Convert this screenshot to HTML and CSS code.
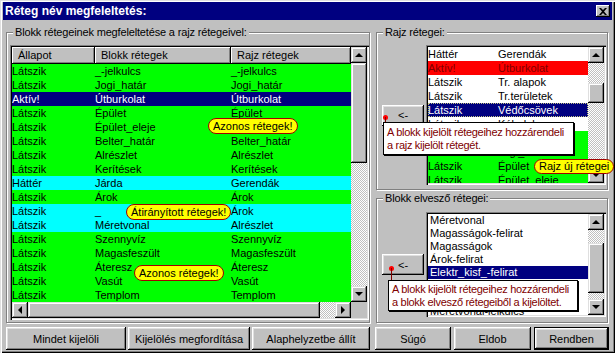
FILE: index.html
```html
<!DOCTYPE html>
<html>
<head>
    <meta charset="UTF-8">
    <title>Réteg név megfeleltetés</title>
    <link rel="stylesheet" href="styles.css">
</head>
<body>
	<div class="window">
		<div class="titlebar">
			<span class="title">Réteg név megfeleltetés:</span>
			<span class="close"><svg width="8" height="7" viewBox="0 0 8 7"><path d="M0 0h2l2 2 2-2h2l-3 3.5 3 3.5h-2l-2-2-2 2h-2l3-3.5z" fill="#000"/></svg></span>
		</div>
		<div class="main">
			<fieldset class="group group-left">
				<legend>Blokk rétegeinek megfeleltetése a rajz rétegeivel:</legend>
				<div class="listview">
					<div class="lv-body">
						<div class="lv-head">
							<div class="hcell">Állapot</div>
							<div class="hcell">Blokk rétegek</div>
							<div class="hcell">Rajz rétegek</div>
						</div>
						<div class="row green"><span>Látszik</span><span>_-jelkulcs</span><span>_-jelkulcs</span></div>
						<div class="row green"><span>Látszik</span><span>Jogi_határ</span><span>Jogi_határ</span></div>
						<div class="row sel"><span>Aktív!</span><span>Útburkolat</span><span>Útburkolat</span></div>
						<div class="row green"><span>Látszik</span><span>Épület</span><span>Épület</span></div>
						<div class="row green"><span>Látszik</span><span>Épület_eleje</span><span>Épület_eleje</span></div>
						<div class="row green"><span>Látszik</span><span>Belter_határ</span><span>Belter_határ</span></div>
						<div class="row green"><span>Látszik</span><span>Alrészlet</span><span>Alrészlet</span></div>
						<div class="row green"><span>Látszik</span><span>Kerítések</span><span>Kerítések</span></div>
						<div class="row cyan"><span>Háttér</span><span>Járda</span><span>Gerendák</span></div>
						<div class="row green"><span>Látszik</span><span>Árok</span><span>Árok</span></div>
						<div class="row cyan"><span>Látszik</span><span>_</span><span>Árok</span></div>
						<div class="row cyan"><span>Látszik</span><span>Méretvonal</span><span>Alrészlet</span></div>
						<div class="row green"><span>Látszik</span><span>Szennyvíz</span><span>Szennyvíz</span></div>
						<div class="row green"><span>Látszik</span><span>Magasfeszült</span><span>Magasfeszült</span></div>
						<div class="row green"><span>Látszik</span><span>Áteresz</span><span>Áteresz</span></div>
						<div class="row green"><span>Látszik</span><span>Vasút</span><span>Vasút</span></div>
						<div class="row green"><span>Látszik</span><span>Templom</span><span>Templom</span></div>
					</div>
					<div class="vscroll">
						<div class="sb-btn"><i class="arr up"></i></div>
						<div class="track"><div class="thumb thumb-main"></div></div>
						<div class="sb-btn"><i class="arr down"></i></div>
					</div>
					<div class="hscroll">
						<div class="sb-btn"><i class="arr left"></i></div>
						<div class="hthumb"></div>
						<div class="htrack"></div>
						<div class="sb-btn"><i class="arr right"></i></div>
					</div>
					<div class="corner"></div>
				</div>
			</fieldset>
			<div class="right-col">
				<fieldset class="group group-rajz">
					<legend>Rajz rétegei:</legend>
					<div class="pair">
						<div class="btn small">&lt;-</div>
						<div class="listbox list-rajz">
							<div class="lb-rows">
								<div class="lrow"><span>Háttér</span><span>Gerendák</span></div>
								<div class="lrow red"><span>Aktív!</span><span>Útburkolat</span></div>
								<div class="lrow"><span>Látszik</span><span>Tr. alapok</span></div>
								<div class="lrow"><span>Látszik</span><span>Tr.területek</span></div>
								<div class="lrow sel focus"><span>Látszik</span><span>Védőcsövek</span></div>
								<div class="lrow"><span>Látszik</span><span>Kábelek</span></div>
								<div class="lrow green"><span>Látszik</span><span>_-jelkulcs</span></div>
								<div class="lrow green"><span>Látszik</span><span>Jogi_határ</span></div>
								<div class="lrow green"><span>Látszik</span><span>Épület</span></div>
								<div class="lrow green"><span>Látszik</span><span>Épület_eleje</span></div>
							</div>
							<div class="vscroll">
								<div class="sb-btn"><i class="arr up"></i></div>
								<div class="track"><div class="thumb thumb-rajz"></div></div>
								<div class="sb-btn"><i class="arr down"></i></div>
							</div>
						</div>
					</div>
				</fieldset>
				<fieldset class="group group-lost">
					<legend>Blokk elvesző rétegei:</legend>
					<div class="pair">
						<div class="btn small">&lt;-</div>
						<div class="listbox list-lost">
							<div class="lb-rows">
								<div class="nrow">Méretvonal</div>
								<div class="nrow">Magasságok-felirat</div>
								<div class="nrow">Magasságok</div>
								<div class="nrow">Árok-felirat</div>
								<div class="nrow sel">Elektr_kisf_-felirat</div>
								<div class="nrow">Kábel-felirat</div>
								<div class="nrow">Közmű-felirat</div>
								<div class="nrow">Méretvonal-jelkulcs</div>
							</div>
							<div class="vscroll">
								<div class="sb-btn"><i class="arr up"></i></div>
								<div class="track"><div class="thumb thumb-lost"></div></div>
								<div class="sb-btn"><i class="arr down"></i></div>
							</div>
						</div>
					</div>
				</fieldset>
			</div>
		</div>
		<div class="buttons">
			<div class="btn b1">Mindet kijelöli</div>
			<div class="btn b2">Kijelölés megfordítása</div>
			<div class="btn b3">Alaphelyzetbe állít</div>
			<div class="btn b4">Súgó</div>
			<div class="btn b5">Eldob</div>
			<div class="btn b6 default">Rendben</div>
		</div>

		<!-- feliratok a kép fölött -->
		<div class="pill p1">Azonos rétegek!</div>
		<div class="pill p2">Átirányított rétegek!</div>
		<div class="pill p3">Azonos rétegek!</div>
		<div class="pill p4">Rajz új rétegei</div>

		<div class="dot d1"></div>
		<div class="stick s1"></div>
		<div class="tip t1">A blokk kijelölt rétegeihez hozzárendeli<br>a rajz kijelölt rétegét.</div>

		<div class="dot d2"></div>
		<div class="stick s2"></div>
		<div class="tip t2">A blokk kijelölt rétegeihez hozzárendeli<br>a blokk elvesző rétegeiből a kijelöltet.</div>
	</div>
</body>
</html>
```

FILE: styles.css
```css
*{
	margin: 0;
	padding: 0;
	box-sizing: border-box;
}
body{
	background: #fff;
	font-family: "Liberation Sans", Arial, sans-serif;
	font-size: 11px;
	color: #000;
}
.window{
	position: relative;
	width: 615px;
	height: 353px;
	background: #c0c0c0;
	padding: 2px 3px 3px 3px;
	box-shadow: inset 1px 1px #dfdfdf, inset 2px 2px #fff, inset -1px -1px #000, inset -2px -2px #808080;
}
.titlebar{
	height: 18px;
	background: #000080;
	color: #fff;
	display: flex;
	align-items: center;
	justify-content: space-between;
	padding: 0 2px 0 2px;
}
.title{
	font-weight: bold;
	font-size: 12px;
}
.close{
	width: 14px;
	height: 12px;
	background: #c0c0c0;
	display: flex;
	align-items: center;
	justify-content: center;
	box-shadow: inset -1px -1px #000, inset 1px 1px #fff, inset -2px -2px #808080;
}

/* csoportok */
.main{
	display: flex;
	gap: 6px;
	margin-top: 6px;
	padding-left: 3px;
	height: 297px;
}
.group{
	border: 1px solid #808080;
	box-shadow: inset 1px 1px #fff, 1px 1px #fff;
	min-width: 0;
}
.group legend{
	height: 13px;
	line-height: 13px;
	padding: 0 2px;
	background: #c0c0c0;
	letter-spacing: -0.16px;
}
.group-left{
	width: 364px;
	height: 297px;
	padding: 6px 0 2px 3px;
}
.group-left legend{
	margin-left: 3px;
}
.right-col{
	width: 232px;
	display: flex;
	flex-direction: column;
	gap: 2px;
}
.group-rajz{
	height: 164px;
	padding: 6px 1px 0 5px;
}
.group-lost{
	height: 131px;
	padding: 7px 1px 0 5px;
}
.group-rajz legend, .group-lost legend{
	margin-left: 1px;
}
.pair{
	display: flex;
	align-items: center;
	gap: 2px;
}

/* nagy lista */
.listview{
	width: 359px;
	height: 275px;
	background: #c0c0c0;
	padding: 2px;
	box-shadow: inset 1px 1px #808080, inset 2px 2px #000, inset -1px -1px #fff, inset -2px -2px #dfdfdf;
	display: grid;
	grid-template-columns: 339px 16px;
	grid-template-rows: 255px 16px;
}
.lv-body{
	overflow: hidden;
	background: #fff;
}
.lv-head{
	display: grid;
	grid-template-columns: 83px 136px 1fr;
	height: 17px;
}
.hcell{
	background: #c0c0c0;
	padding-left: 6px;
	line-height: 16px;
	box-shadow: inset -1px -1px #000, inset 1px 1px #fff, inset -2px -2px #808080;
}
.row{
	display: grid;
	grid-template-columns: 83px 136px 1fr;
	height: 14px;
	line-height: 14px;
	white-space: nowrap;
}
.green{ background: #00ff00; }
.cyan{ background: #00ffff; }
.sel{ background: #000080; color: #fff; }
.red{ background: #ff0000; color: #800000; }

/* görgetősáv */
.vscroll{
	display: flex;
	flex-direction: column;
	width: 16px;
}
.track{
	flex: 1;
	background: repeating-conic-gradient(#fff 0 25%, #c0c0c0 0 50%) 0 0 / 2px 2px;
}
.sb-btn, .thumb, .hthumb{
	background: #c0c0c0;
	box-shadow: inset -1px -1px #000, inset 1px 1px #dfdfdf, inset -2px -2px #808080, inset 2px 2px #fff;
}
.sb-btn{
	width: 16px;
	height: 16px;
	flex: none;
	display: flex;
	align-items: center;
	justify-content: center;
}
.thumb{ width: 16px; }
.thumb-main{ height: 100px; }
.thumb-rajz{ height: 20px; margin-top: 20px; }
.thumb-lost{ height: 50px; margin-top: 13px; }
.hscroll{
	display: flex;
}
.hthumb{ width: 292px; }
.htrack{
	flex: 1;
	background: repeating-conic-gradient(#fff 0 25%, #c0c0c0 0 50%) 0 0 / 2px 2px;
}
.corner{ background: #c0c0c0; }
.arr{
	display: block;
	width: 0;
	height: 0;
}
.arr.up{ border-left: 4px solid transparent; border-right: 4px solid transparent; border-bottom: 4px solid #000; margin-top: -1px; }
.arr.down{ border-left: 4px solid transparent; border-right: 4px solid transparent; border-top: 4px solid #000; }
.arr.left{ border-top: 4px solid transparent; border-bottom: 4px solid transparent; border-right: 4px solid #000; margin-left: -1px; }
.arr.right{ border-top: 4px solid transparent; border-bottom: 4px solid transparent; border-left: 4px solid #000; }

/* jobb oldali listák */
.listbox{
	width: 180px;
	padding: 2px;
	background: #fff;
	display: flex;
	box-shadow: inset 1px 1px #808080, inset 2px 2px #000, inset -1px -1px #fff, inset -2px -2px #dfdfdf;
}
.list-rajz{ height: 140px; }
.list-lost{ height: 105px; }
.lb-rows{
	flex: 1;
	overflow: hidden;
}
.lrow{
	display: grid;
	grid-template-columns: 70px 1fr;
	height: 14px;
	line-height: 14px;
	white-space: nowrap;
}
.focus{
	outline: 1px dotted #c0c080;
	outline-offset: -1px;
}
.nrow{
	height: 13px;
	line-height: 13px;
	padding-left: 2px;
	white-space: nowrap;
}

/* gombok */
.btn{
	background: #c0c0c0;
	display: flex;
	align-items: center;
	justify-content: center;
	box-shadow: inset -1px -1px #000, inset 1px 1px #fff, inset -2px -2px #808080, inset 2px 2px #dfdfdf;
}
.btn.small{
	width: 42px;
	height: 21px;
}
.buttons{
	display: flex;
	margin-top: 4px;
	padding-left: 3px;
	height: 23px;
}
.b1{ width: 120px; }
.b2{ width: 122px; margin-left: 2px; }
.b3{ width: 118px; margin-left: 2px; }
.b4{ width: 76px; margin-left: 5px; }
.b5{ width: 77px; margin-left: 3px; }
.b6{ width: 75px; margin-left: 3px; }
.btn.default{
	border: 1px solid #000;
}

/* magyarázó feliratok */
.pill{
	position: absolute;
	height: 16px;
	line-height: 14px;
	padding: 0 4px;
	background: #ffff00;
	border: 1px solid #a00000;
	border-radius: 8px;
	white-space: nowrap;
}
.p1{ left: 208px; top: 118px; }
.p2{ left: 126px; top: 204px; }
.p3{ left: 134px; top: 265px; }
.p4{ left: 534px; top: 159px; height: 15px; line-height: 13px; }
.dot{
	position: absolute;
	width: 5px;
	height: 5px;
	border-radius: 50%;
	background: #ff0000;
}
.stick{
	position: absolute;
	width: 1px;
	background: #800000;
}
.tip{
	position: absolute;
	background: #fff;
	color: #800000;
	border: 1px solid #000;
	box-shadow: 1px 1px 0 #000;
	padding: 2px 3px;
	line-height: 13px;
	white-space: nowrap;
	letter-spacing: -0.3px;
}
.d1{ left: 383px; top: 115px; }
.s1{ left: 385px; top: 117px; height: 5px; }
.t1{ left: 383px; top: 122px; width: 191px; height: 33px; padding-top: 3px; }
.d2{ left: 389px; top: 266px; }
.s2{ left: 391px; top: 268px; height: 12px; }
.t2{ left: 388px; top: 280px; width: 190px; height: 31px; }
```
